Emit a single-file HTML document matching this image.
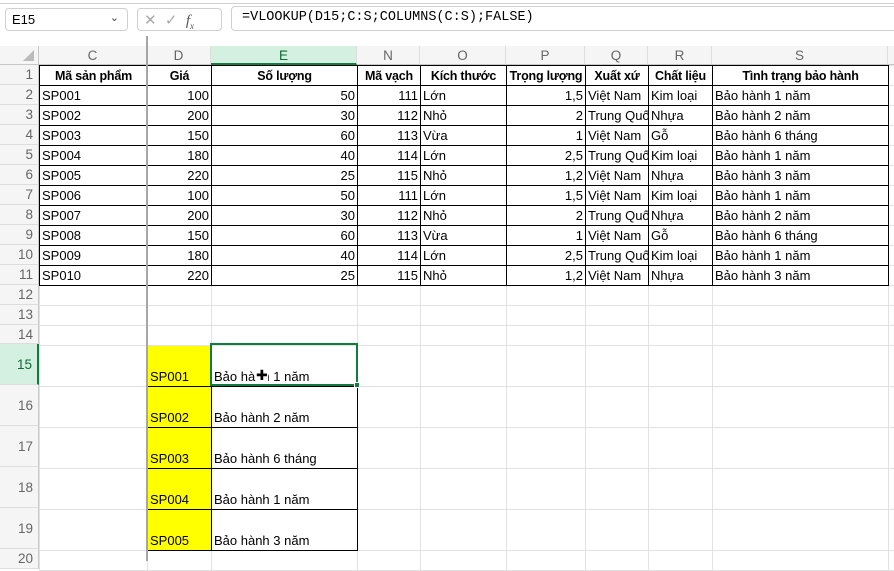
<!DOCTYPE html>
<html><head><meta charset="utf-8"><style>
*{box-sizing:border-box;margin:0;padding:0}
body{width:894px;height:561px;overflow:hidden;background:#fff;font-family:"Liberation Sans",Arial,sans-serif;font-size:13px;color:#000;position:relative}
.abs{position:absolute}
table{border-collapse:collapse;table-layout:fixed;position:absolute;left:39px;top:65px;width:869px}
td{height:20px;padding:0 2px;white-space:nowrap;overflow:hidden;border:1px solid #e1e1e1;line-height:18px;vertical-align:bottom}
.d td{border:1px solid #000}
.h td{font-weight:bold;text-align:center;font-size:12.5px;letter-spacing:-0.2px}
.r{text-align:right}
.t td{height:41px}
.y{background:#ff0;border:1px solid #000!important}
.b{border:1px solid #000!important}
.x{border:1px solid #e1e1e1!important;border-left:1px solid #000!important}
.rh{position:absolute;left:0;width:39px;background:#f5f5f5;color:#666;text-align:right;padding-right:5px;border-bottom:1px solid #ddd;border-right:1px solid #c8c8c8;font-size:13.5px}
.ch{position:absolute;top:46px;height:19px;background:#f5f5f5;color:#666;text-align:center;border-right:1px solid #ddd;border-bottom:1px solid #c8c8c8;line-height:19px;font-size:13.5px}
</style></head><body>
<div class="abs" style="left:0;top:0;width:894px;height:4px;border-bottom:1px solid #d0d0d0;background:#fff"></div>
<div class="abs" style="left:5px;top:8px;width:123px;height:23px;border:1px solid #d0d0d0;border-radius:4px;padding:3px 6px;font-size:13px">E15<span style="position:absolute;right:8px;top:2px;font-size:11px;color:#444">&#8964;</span></div>
<div class="abs" style="left:137px;top:8px;width:85px;height:23px;border:1px solid #d0d0d0;border-radius:4px;color:#aaa;font-size:15px;padding:2px 6px">✕&nbsp;&nbsp;✓&nbsp;&nbsp;<i style="font-family:'Liberation Serif';color:#555">f<sub style="font-size:9px">x</sub></i></div>
<div class="abs" style="left:231px;top:6px;width:670px;height:25px;border:1px solid #d0d0d0;border-radius:4px;padding:3px 10px;font-family:'Liberation Mono',monospace;font-size:13.5px">=VLOOKUP(D15;C:S;COLUMNS(C:S);FALSE)</div>
<div class="abs" style="left:0;top:46px;width:39px;height:19px;background:#f5f5f5;border-right:1px solid #c8c8c8;border-bottom:1px solid #c8c8c8"><div style="position:absolute;right:4px;bottom:3px;width:0;height:0;border-left:11px solid transparent;border-bottom:11px solid #bbb"></div></div>
<div class="ch" style="left:39px;width:108px">C</div>
<div class="ch" style="left:147px;width:64px">D</div>
<div class="ch" style="left:211px;width:146px;background:#d3f0e0;color:#0e6b34;border-bottom:2px solid #107c41">E</div>
<div class="ch" style="left:357px;width:63px">N</div>
<div class="ch" style="left:420px;width:86px">O</div>
<div class="ch" style="left:506px;width:79px">P</div>
<div class="ch" style="left:585px;width:63px">Q</div>
<div class="ch" style="left:648px;width:64px">R</div>
<div class="ch" style="left:712px;width:176px">S</div>
<div class="ch" style="left:888px;width:20px"></div>
<div class="rh" style="top:65px;height:20px;line-height:20px">1</div>
<div class="rh" style="top:85px;height:20px;line-height:20px">2</div>
<div class="rh" style="top:105px;height:20px;line-height:20px">3</div>
<div class="rh" style="top:125px;height:20px;line-height:20px">4</div>
<div class="rh" style="top:145px;height:20px;line-height:20px">5</div>
<div class="rh" style="top:165px;height:20px;line-height:20px">6</div>
<div class="rh" style="top:185px;height:20px;line-height:20px">7</div>
<div class="rh" style="top:205px;height:20px;line-height:20px">8</div>
<div class="rh" style="top:225px;height:20px;line-height:20px">9</div>
<div class="rh" style="top:245px;height:20px;line-height:20px">10</div>
<div class="rh" style="top:265px;height:20px;line-height:20px">11</div>
<div class="rh" style="top:285px;height:20px;line-height:20px">12</div>
<div class="rh" style="top:305px;height:20px;line-height:20px">13</div>
<div class="rh" style="top:325px;height:19px;line-height:19px">14</div>
<div class="rh" style="top:344px;height:41px;line-height:41px;background:#d3f0e0;color:#0e6b34;border-right:2px solid #107c41">15</div>
<div class="rh" style="top:385px;height:41px;line-height:41px">16</div>
<div class="rh" style="top:426px;height:41px;line-height:41px">17</div>
<div class="rh" style="top:467px;height:41px;line-height:41px">18</div>
<div class="rh" style="top:508px;height:41px;line-height:41px">19</div>
<div class="rh" style="top:549px;height:20px;line-height:20px">20</div>
<table>
<colgroup><col style="width:108px"><col style="width:64px"><col style="width:146px"><col style="width:63px"><col style="width:86px"><col style="width:79px"><col style="width:63px"><col style="width:64px"><col style="width:176px"><col style="width:20px"></colgroup>
<tr class="d h"><td>Mã sản phẩm</td><td>Giá</td><td>Số lượng</td><td>Mã vạch</td><td>Kích thước</td><td>Trọng lượng</td><td>Xuất xứ</td><td>Chất liệu</td><td>Tình trạng bảo hành</td><td class="x"></td></tr>
<tr class="d"><td>SP001</td><td class="r">100</td><td class="r">50</td><td class="r">111</td><td>Lớn</td><td class="r">1,5</td><td>Việt Nam</td><td>Kim loại</td><td>Bảo hành 1 năm</td><td class="x"></td></tr>
<tr class="d"><td>SP002</td><td class="r">200</td><td class="r">30</td><td class="r">112</td><td>Nhỏ</td><td class="r">2</td><td>Trung Quố</td><td>Nhựa</td><td>Bảo hành 2 năm</td><td class="x"></td></tr>
<tr class="d"><td>SP003</td><td class="r">150</td><td class="r">60</td><td class="r">113</td><td>Vừa</td><td class="r">1</td><td>Việt Nam</td><td>Gỗ</td><td>Bảo hành 6 tháng</td><td class="x"></td></tr>
<tr class="d"><td>SP004</td><td class="r">180</td><td class="r">40</td><td class="r">114</td><td>Lớn</td><td class="r">2,5</td><td>Trung Quố</td><td>Kim loại</td><td>Bảo hành 1 năm</td><td class="x"></td></tr>
<tr class="d"><td>SP005</td><td class="r">220</td><td class="r">25</td><td class="r">115</td><td>Nhỏ</td><td class="r">1,2</td><td>Việt Nam</td><td>Nhựa</td><td>Bảo hành 3 năm</td><td class="x"></td></tr>
<tr class="d"><td>SP006</td><td class="r">100</td><td class="r">50</td><td class="r">111</td><td>Lớn</td><td class="r">1,5</td><td>Việt Nam</td><td>Kim loại</td><td>Bảo hành 1 năm</td><td class="x"></td></tr>
<tr class="d"><td>SP007</td><td class="r">200</td><td class="r">30</td><td class="r">112</td><td>Nhỏ</td><td class="r">2</td><td>Trung Quố</td><td>Nhựa</td><td>Bảo hành 2 năm</td><td class="x"></td></tr>
<tr class="d"><td>SP008</td><td class="r">150</td><td class="r">60</td><td class="r">113</td><td>Vừa</td><td class="r">1</td><td>Việt Nam</td><td>Gỗ</td><td>Bảo hành 6 tháng</td><td class="x"></td></tr>
<tr class="d"><td>SP009</td><td class="r">180</td><td class="r">40</td><td class="r">114</td><td>Lớn</td><td class="r">2,5</td><td>Trung Quố</td><td>Kim loại</td><td>Bảo hành 1 năm</td><td class="x"></td></tr>
<tr class="d"><td>SP010</td><td class="r">220</td><td class="r">25</td><td class="r">115</td><td>Nhỏ</td><td class="r">1,2</td><td>Việt Nam</td><td>Nhựa</td><td>Bảo hành 3 năm</td><td class="x"></td></tr>
<tr><td></td><td></td><td></td><td></td><td></td><td></td><td></td><td></td><td></td><td></td></tr>
<tr><td></td><td></td><td></td><td></td><td></td><td></td><td></td><td></td><td></td><td></td></tr>
<tr><td style="height:19px"></td><td></td><td></td><td></td><td></td><td></td><td></td><td></td><td></td><td></td></tr>
<tr class="t"><td></td><td class="y">SP001</td><td class="b">Bảo hành 1 năm</td><td></td><td></td><td></td><td></td><td></td><td></td><td></td></tr>
<tr class="t"><td></td><td class="y">SP002</td><td class="b">Bảo hành 2 năm</td><td></td><td></td><td></td><td></td><td></td><td></td><td></td></tr>
<tr class="t"><td></td><td class="y">SP003</td><td class="b">Bảo hành 6 tháng</td><td></td><td></td><td></td><td></td><td></td><td></td><td></td></tr>
<tr class="t"><td></td><td class="y">SP004</td><td class="b">Bảo hành 1 năm</td><td></td><td></td><td></td><td></td><td></td><td></td><td></td></tr>
<tr class="t"><td></td><td class="y">SP005</td><td class="b">Bảo hành 3 năm</td><td></td><td></td><td></td><td></td><td></td><td></td><td></td></tr>
<tr><td></td><td></td><td></td><td></td><td></td><td></td><td></td><td></td><td></td><td></td></tr>
</table>
<div class="abs" style="left:146px;top:36px;width:2px;height:525px;background:#a6a6a6"></div>
<div class="abs" style="left:210px;top:343px;width:148px;height:43px;border:2px solid #107c41"></div>
<div class="abs" style="left:354px;top:382px;width:6px;height:6px;background:#107c41;border:1px solid #fff"></div>
<div class="abs" style="left:256px;top:368px;font-size:14px;line-height:14px;color:#000;background:#fff">✚</div>
</body></html>
